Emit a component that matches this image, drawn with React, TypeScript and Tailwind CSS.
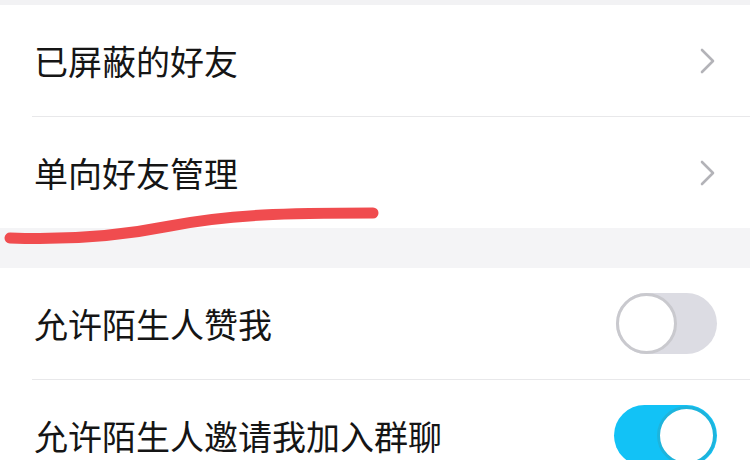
import React from "react";

function Chevron() {
  return (
    <svg width="18" height="26" viewBox="0 0 18 26" className="shrink-0">
      <path d="M3 2 L14 13 L3 24" fill="none" stroke="#b3b3b8" strokeWidth="2.6" strokeLinecap="round" strokeLinejoin="round" />
    </svg>
  );
}

function Toggle({ on }: { on: boolean }) {
  return on ? (
    <div className="relative w-[103px] h-[61px] rounded-full bg-[#12c2f6] shrink-0">
      <div className="absolute right-[1px] top-[1px] w-[59px] h-[59px] rounded-full bg-white border-[3px] border-[#1eb4dc]" />
    </div>
  ) : (
    <div className="relative w-[101px] h-[61px] rounded-full bg-[#dcdce3] shrink-0">
      <div className="absolute left-0 top-0 w-[61px] h-[61px] rounded-full bg-white border-[3px] border-[#c9c9ce]" />
    </div>
  );
}

function Row({ label, right, divider }: { label: string; right: React.ReactNode; divider?: boolean }) {
  return (
    <div className="bg-white">
      <div className="h-[111px] flex items-center justify-between pl-[34px] pr-[33px]">
        <span className="text-[34px] leading-none text-[#151515]">{label}</span>
        {right}
      </div>
      {divider && <div className="ml-[32px] h-[1px] bg-[#e8e8ea]" />}
    </div>
  );
}

export default function App() {
  return (
    <div
      className="relative w-[750px] h-[460px] overflow-hidden bg-white"
      style={{ fontFamily: '"Noto Sans CJK SC", "Noto Sans", sans-serif' }}
    >
      <div className="h-[5px] bg-[#f2f2f4]" />
      <Row label="已屏蔽的好友" right={<div className="pr-[0px]"><Chevron /></div>} divider />
      <Row label="单向好友管理" right={<Chevron />} />
      <div className="h-[40px] bg-[#f4f4f6]" />
      <Row label="允许陌生人赞我" right={<Toggle on={false} />} divider />
      <Row label="允许陌生人邀请我加入群聊" right={<Toggle on={true} />} />
      <svg className="absolute left-0 top-0 pointer-events-none" width="750" height="460">
        <path
          d="M10 238 C 60 240, 110 238, 170 226 C 230 214, 290 213, 373 213"
          fill="none"
          stroke="#f04c4f"
          strokeWidth="11"
          strokeLinecap="round"
        />
      </svg>
    </div>
  );
}
